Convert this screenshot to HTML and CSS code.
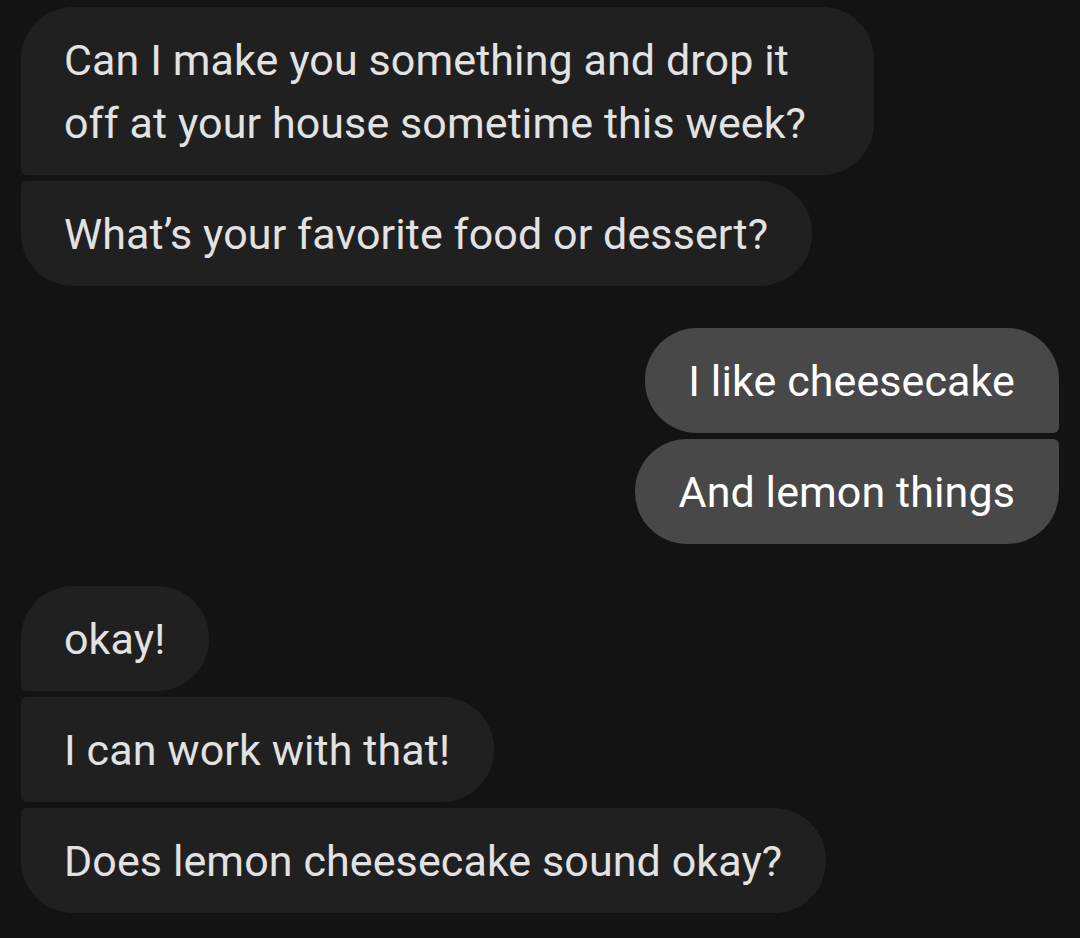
FILE: index.html
```html
<!DOCTYPE html>
<html lang="en">
<head>
<meta charset="utf-8">
<title>Messages</title>
<link rel="stylesheet" href="styles.css">
</head>
<body>
<main class="thread">
  <section class="group group-in">
    <div class="bubble in first wrapped">Can I make you something and drop it<br>off at your house sometime this week?</div>
    <div class="bubble in last">What’s your favorite food or dessert?</div>
  </section>
  <section class="group group-out">
    <div class="bubble out first">I like cheesecake</div>
    <div class="bubble out last">And lemon things</div>
  </section>
  <section class="group group-in">
    <div class="bubble in first">okay!</div>
    <div class="bubble in middle">I can work with that!</div>
    <div class="bubble in last">Does lemon cheesecake sound okay?</div>
  </section>
</main>
</body>
</html>
```

FILE: styles.css
```css
html, body {
  margin: 0;
  padding: 0;
  background: #131313;
}

body {
  width: 1080px;
  height: 938px;
  overflow: hidden;
  font-family: "Roboto", "Noto Sans", sans-serif;
}

.thread {
  display: flex;
  flex-direction: column;
  gap: 42px;
  padding: 7px 21px 0 21px;
}

.group {
  display: flex;
  flex-direction: column;
  gap: 6px;
}

.group-in { align-items: flex-start; }
.group-out { align-items: flex-end; }

.bubble {
  font-size: 43px;
  line-height: 63px;
  padding: 22px 44px 20px 43px;
  border-radius: 52px;
  white-space: nowrap;
  letter-spacing: 0.1px;
}

.bubble.wrapped {
  box-sizing: border-box;
  width: 853px;
}

.in {
  background: #202020;
  color: #e2e2e2;
}

.out {
  background: #484848;
  color: #ffffff;
}

.in.first { border-bottom-left-radius: 6px; }
.in.middle { border-top-left-radius: 6px; border-bottom-left-radius: 6px; }
.in.last { border-top-left-radius: 6px; }

.out.first { border-bottom-right-radius: 6px; }
.out.last { border-top-right-radius: 6px; }
```
